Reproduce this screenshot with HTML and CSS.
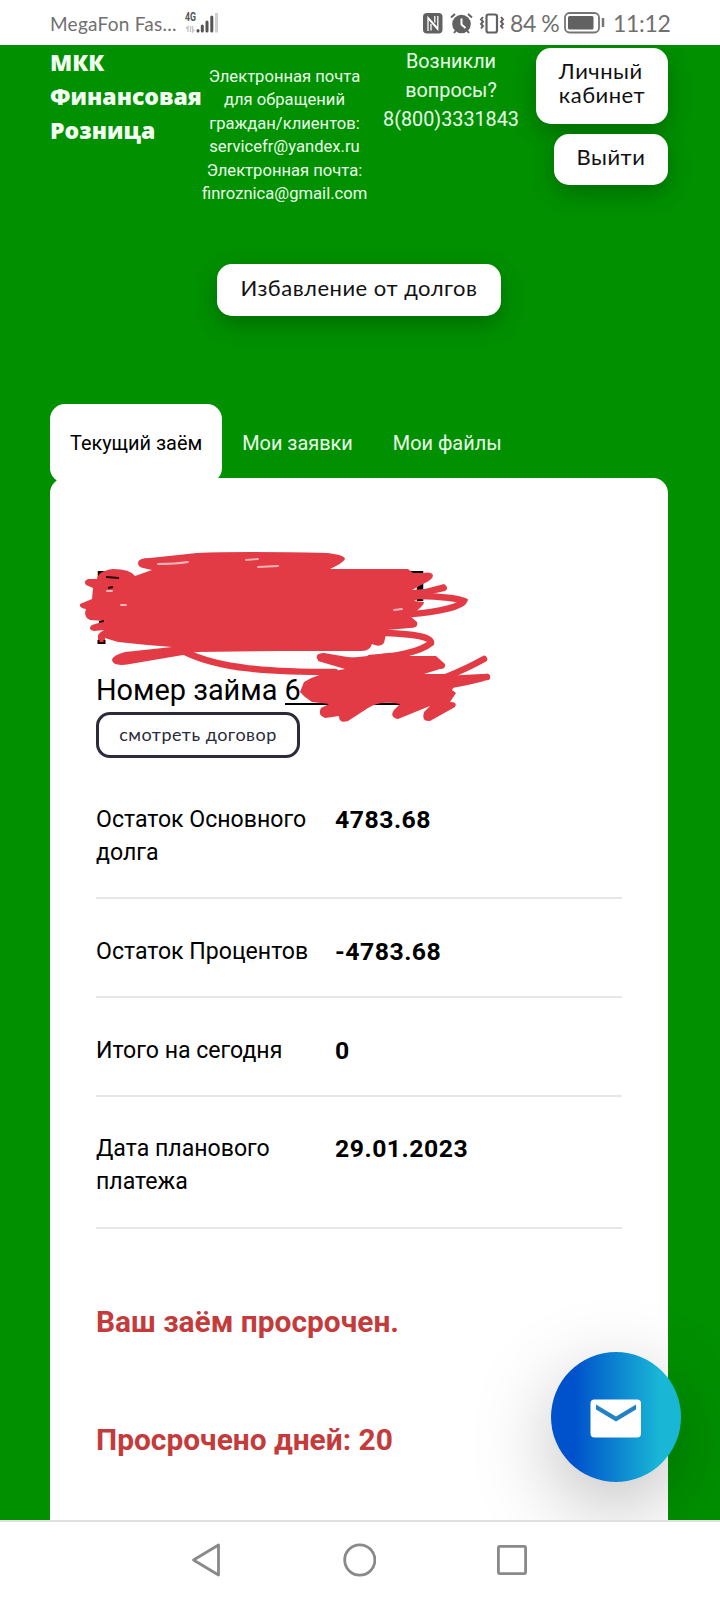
FILE: index.html
```html
<!DOCTYPE html>
<html lang="ru">

<head>
  <meta charset="utf-8">
  <meta name="viewport" content="width=device-width, initial-scale=1.0">
  <title>Личный кабинет</title>
  <link rel="stylesheet" href="styles.css">
</head>

<body>
  <div class="status">
    <span class="carrier">MegaFon Fas...</span>
    <svg class="signal" width="34" height="26" viewBox="0 -4 34 26">
      <text x="0" y="9" class="net" textLength="11" lengthAdjust="spacingAndGlyphs">4G</text>
      <path d="M3 20v-5.500l-2 2M5.500 14v6M7.500 14v6l2-2.500" fill="none" stroke="#c4c4c4" stroke-width="1.300"/>
      <path d="M13 18.500v.5M17.300 14v5M22 10v9M26.800 5v14" stroke="#555" stroke-width="3" stroke-linecap="round"/>
      <path d="M31.500 1v19.500" stroke="#d0d0d0" stroke-width="3"/>
    </svg>
    <div class="status-right">
      <svg width="20" height="21" viewBox="0 0 20 21">
        <rect width="19.500" height="20.500" rx="4" fill="#616161"/>
        <path d="M5 18V4.500l9.500 10.500M14.800 3v13.500L5.500 6M8 11v6.500M11.800 3v6.500" fill="none" stroke="#fff" stroke-width="1.300"/>
      </svg>
      <svg class="alarm" width="23" height="21" viewBox="0 0 23 21">
        <circle cx="11.500" cy="11" r="9.300" fill="#616161"/>
        <path d="M1 4.500L5 1M22 4.500L18 1M4 20l2-2.500M19 20l-2-2.500" stroke="#616161" stroke-width="2"/>
        <path d="M11.500 5.500v6l4 3.500" fill="none" stroke="#fff" stroke-width="2"/>
      </svg>
      <svg class="vibrate" width="26" height="21" viewBox="0 0 26 21">
        <rect x="7.500" y="1.500" width="10.500" height="18" rx="2" fill="none" stroke="#616161" stroke-width="2.200"/>
        <path d="M4 4L2 6.500l2 2.200-2 2.200 2 2.200-2 2.300M22 4l2 2.500-2 2.200 2 2.200-2 2.200 2 2.300" fill="none" stroke="#616161" stroke-width="2"/>
      </svg>
      <span class="percent">84 %</span>
      <svg class="battery" width="41" height="22" viewBox="0 0 41 22">
        <rect x="1" y="1" width="34" height="19.500" rx="4.500" fill="none" stroke="#757575" stroke-width="1.800"/>
        <rect x="4" y="4" width="25.500" height="13.500" rx="1.500" fill="#616161"/>
        <path d="M39 6v9" stroke="#757575" stroke-width="2.500"/>
      </svg>
      <span class="clock">11:12</span>
    </div>
  </div>

  <div class="page">
    <header class="header">
      <div class="logo">МКК<br>Финансовая<br>Розница</div>
      <div class="mails">Электронная почта<br>для обращений<br>граждан/клиентов:<br>servicefr@yandex.ru<br>Электронная почта:<br>finroznica@gmail.com</div>
      <div class="phone">Возникли<br>вопросы?<br>8(800)3331843</div>
      <div class="actions">
        <a class="btn btn-cabinet">Личный<br>кабинет</a>
        <a class="btn btn-exit">Выйти</a>
      </div>
    </header>

    <div class="promo">
      <a class="btn btn-promo">Избавление от долгов</a>
    </div>

    <nav class="tabs">
      <a class="tab active">Текущий заём</a>
      <a class="tab">Мои заявки</a>
      <a class="tab">Мои файлы</a>
    </nav>

    <main class="card">
      <h1 class="name">
        <span>В</span><span>й</span>
        <span>П</span>
      </h1>
      <svg class="marker" width="420" height="180" viewBox="75 545 420 180">
        <path class="fill" d="M138 563Q138 558 150 558L197 553Q240 551 327 553Q345 555 345 559Q343 563 330 569L408 569L413 573L422 573Q433 571 433 576Q432 580 423 584L412 590L425 589L444 584Q450 588 445 591L427 595L414 601L424 602Q424 606 410 616L417 622Q419 628 410 628L387 630L384 643Q380 648 372 644Q370 651 362 651L280 651L197 652L183 655L130 664Q113 667 112 660Q113 655 125 652L172 647Q145 645 118 642L105 638L105 644L98 644L98 637Q97 634 104 630L94 631Q87 629 92 625L105 621L90 620Q83 617 86 609Q79 608 80 604L92 599L93 588L86 585Q83 581 88 579L97 579Q98 571 113 569Q130 569 135 576L152 570L143 568Q138 567 138 563Z"/>
        <path class="fill" d="M300 692L304 682Q318 673 345 669L318 661Q317 652 324 653L365 660L390 656L436 656L445 664Q446 669 440 669L424 674L452 674L455 685L452 690L456 693L450 702Q458 702 455 707L430 721Q421 722 424 712L430 706L398 719Q389 717 394 710L400 704Q380 700 368 708L348 721Q339 724 339 716L325 718Q317 715 321 708L329 704L312 702L305 697Z"/>
        <g class="line">
          <path d="M185 652C220 669 270 672 335 672"/>
          <path d="M420 596C440 596 460 599 464 601C462 606 440 612 412 614"/>
          <path d="M386 633C414 634 432 637 431 643C420 652 395 657 370 658"/>
          <path d="M320 657C340 663 360 661 390 656"/>
          <path d="M446 677Q468 668 484 659"/>
          <path d="M445 686Q470 682 487 677M448 679L487 677"/>
        </g>
        <path class="gap" d="M158 564Q175 564 188 562M246 560l12-1M258 567l20-1M107 591l5 0M121 605l5 0M394 610l8-1"/>
        <path class="rest" d="M106 577l13 1M108 588l5-1M99 622l5-1M98.500 640v4M104.500 640v4M98 643h7"/>
      </svg>
      <div class="loan">Номер займа <span class="number">6</span></div>
      <a class="contract">смотреть договор</a>

      <div class="rows">
        <div class="row"><div class="label">Остаток Основного долга</div><div class="value">4783.68</div></div>
        <div class="row"><div class="label">Остаток Процентов</div><div class="value">-4783.68</div></div>
        <div class="row"><div class="label">Итого на сегодня</div><div class="value">0</div></div>
        <div class="row"><div class="label">Дата планового платежа</div><div class="value">29.01.2023</div></div>
      </div>

      <div class="overdue">
        <p>Ваш заём просрочен.</p>
        <p>Просрочено дней: <span>20</span></p>
      </div>
    </main>

    <a class="mail-btn">
      <svg width="52" height="39" viewBox="0 0 52 39">
        <rect x=".5" y=".5" width="50.500" height="38" rx="4" fill="#fff"/>
        <path d="M6 5.500v5L26 22.500l20-12v-5L26 17.500z" fill="#2382c3"/>
      </svg>
    </a>
  </div>

  <div class="navbar">
    <svg width="30" height="34" viewBox="0 0 30 34">
      <path d="M27.500 2v30L2.500 17z"/>
    </svg>
    <svg width="34" height="34" viewBox="0 0 34 34">
      <circle cx="17.800" cy="17" r="15.100"/>
    </svg>
    <svg width="30" height="30" viewBox="0 0 30 30">
      <rect x="1.400" y="1.400" width="27.200" height="27.200" rx="1.500"/>
    </svg>
  </div>
</body>

</html>
```
FILE: styles.css
```css
* {
  box-sizing: border-box;
}

body {
  margin: 0;
  height: 1600px;
  display: flex;
  flex-direction: column;
  overflow: hidden;
  background: #fff;
  font-family: Roboto, sans-serif;
  color: #000;
}

.status {
  flex: none;
  height: 45px;
  padding: 0 50px;
  display: flex;
  align-items: flex-start;
  color: #707070;
  font-family: Lato, sans-serif;
  white-space: nowrap;
}
.carrier {
  width: 135px;
  padding-top: 12px;
  font-size: 19px;
  line-height: 24px;
  letter-spacing: 0.25px;
}
.signal {
  margin-top: 8px;
  overflow: visible;
}
.net {
  font: bold 12px Roboto, sans-serif;
  fill: #555;
}
.status-right {
  display: flex;
  margin-left: auto;
  padding-top: 13px;
}
.alarm {
  margin-left: 7px;
}
.vibrate {
  margin-left: 6px;
}
.percent {
  width: 59px;
  padding-left: 5px;
  font-size: 23px;
  line-height: 24px;
  margin-top: -2px;
  letter-spacing: -0.4px;
}
.battery {
  margin-top: -1px;
}
.clock {
  width: 65px;
  padding-left: 8px;
  font-size: 23px;
  line-height: 24px;
  margin-top: -2px;
  letter-spacing: -0.3px;
}

.page {
  flex: none;
  height: 1475px;
  padding: 0 52px 0 50px;
  position: relative;
  overflow: hidden;
  background: #009000;
}

.header {
  display: flex;
  height: 219px;
  color: #e9ffe9;
  white-space: nowrap;
}
.logo {
  width: 152px;
  font: 800 23px/34px "Open Sans", sans-serif;
  color: #f4fff4;
}
.mails {
  width: 165px;
  padding-top: 20px;
  text-align: center;
  font-size: 16.6px;
  line-height: 23.4px;
}
.phone {
  width: 168px;
  padding-top: 2px;
  text-align: center;
  font-size: 19.8px;
  line-height: 29px;
}
.actions {
  width: 133px;
  padding-top: 3px;
  display: flex;
  flex-direction: column;
  align-items: flex-end;
  gap: 10px;
}

.btn {
  display: flex;
  justify-content: center;
  border-radius: 15px;
  background: #fff;
  box-shadow: 0 8px 22px rgba(0, 0, 0, 0.25);
  color: #111;
  font: 22px/24px Lato, sans-serif;
  letter-spacing: 0.5px;
  white-space: nowrap;
}
.btn-cabinet {
  width: 132px;
  height: 76px;
  padding-top: 11px;
}
.btn-exit {
  width: 114px;
  height: 51px;
  padding-top: 11px;
}
.promo {
  display: flex;
  justify-content: center;
  height: 140px;
}
.btn-promo {
  width: 284px;
  height: 52px;
  padding-top: 12px;
}

.tabs {
  display: flex;
  height: 74px;
}
.tab {
  height: 79px;
  padding: 27.6px 20px 0;
  border-radius: 15px;
  color: #e9ffe9;
  font-size: 19.9px;
  line-height: 24px;
  white-space: nowrap;
}
.tab.active {
  background: #fff;
  color: #000;
}

.card {
  position: relative;
  height: 1042px;
  padding: 87px 46px 0;
  border-radius: 15px 15px 0 0;
  background: #fff;
}
.name {
  margin: 0 0 0 -1px;
  width: 331px;
  height: 103px;
  display: flex;
  flex-wrap: wrap;
  justify-content: space-between;
  align-content: flex-start;
  font-size: 43px;
  line-height: 42px;
}
/* lies over the name and the loan number */
.marker {
  position: absolute;
  left: 25px;
  top: 67px;
}
.marker .fill {
  fill: #e33b46;
}
.marker .line {
  fill: none;
  stroke: #e33b46;
  stroke-width: 6.5;
  stroke-linecap: round;
}
.marker .gap {
  fill: none;
  stroke: #f7b4b8;
  stroke-width: 1.8;
  stroke-linecap: round;
}
.marker .rest {
  stroke: #200;
  stroke-width: 2;
}

.loan {
  height: 44px;
  font-size: 28.9px;
  line-height: 44px;
  white-space: nowrap;
}
.number {
  display: inline-block;
  width: 170px;
  height: 33px;
  line-height: 36px;
  border-bottom: 2px solid #000;
}
.contract {
  display: flex;
  justify-content: center;
  width: 204px;
  height: 46px;
  padding-top: 7px;
  border: 3px solid #2c2b3b;
  border-radius: 14px;
  color: #2c2b3b;
  font: 18px/24px Lato, sans-serif;
  letter-spacing: 0.5px;
  white-space: nowrap;
}

.rows {
  margin-top: 9.5px;
}
.row {
  display: flex;
  padding: 35.6px 0 28.2px;
  border-bottom: 2px solid #e7e7e7;
  line-height: 33px;
}
.label {
  width: 239px;
  padding-right: 25px;
  font-size: 23.1px;
}
.value {
  font-size: 24.8px;
  font-weight: bold;
  letter-spacing: 0.5px;
}

.overdue {
  margin-top: -5px;
  color: #c43b3b;
  font-size: 29.9px;
  font-weight: bold;
  line-height: 41px;
  white-space: nowrap;
}
.overdue p {
  margin: 0;
  padding-top: 77px;
}

.mail-btn {
  position: absolute;
  right: 39px;
  bottom: 38px;
  width: 130px;
  height: 130px;
  padding-top: 2px;
  display: flex;
  align-items: center;
  justify-content: center;
  border-radius: 50%;
  background: linear-gradient(90deg, #0052cc 18%, #19b7d6 84%);
  box-shadow: 0 25px 80px rgba(0, 0, 0, 0.25);
}

.navbar {
  flex: none;
  height: 80px;
  padding: 0 193px 2px 191px;
  display: flex;
  align-items: center;
  justify-content: space-between;
  border-top: 2px solid #e0e0e0;
  background: #fff;
}
.navbar svg {
  fill: none;
  stroke: #898989;
  stroke-width: 2.8;
  stroke-linejoin: round;
}
```
